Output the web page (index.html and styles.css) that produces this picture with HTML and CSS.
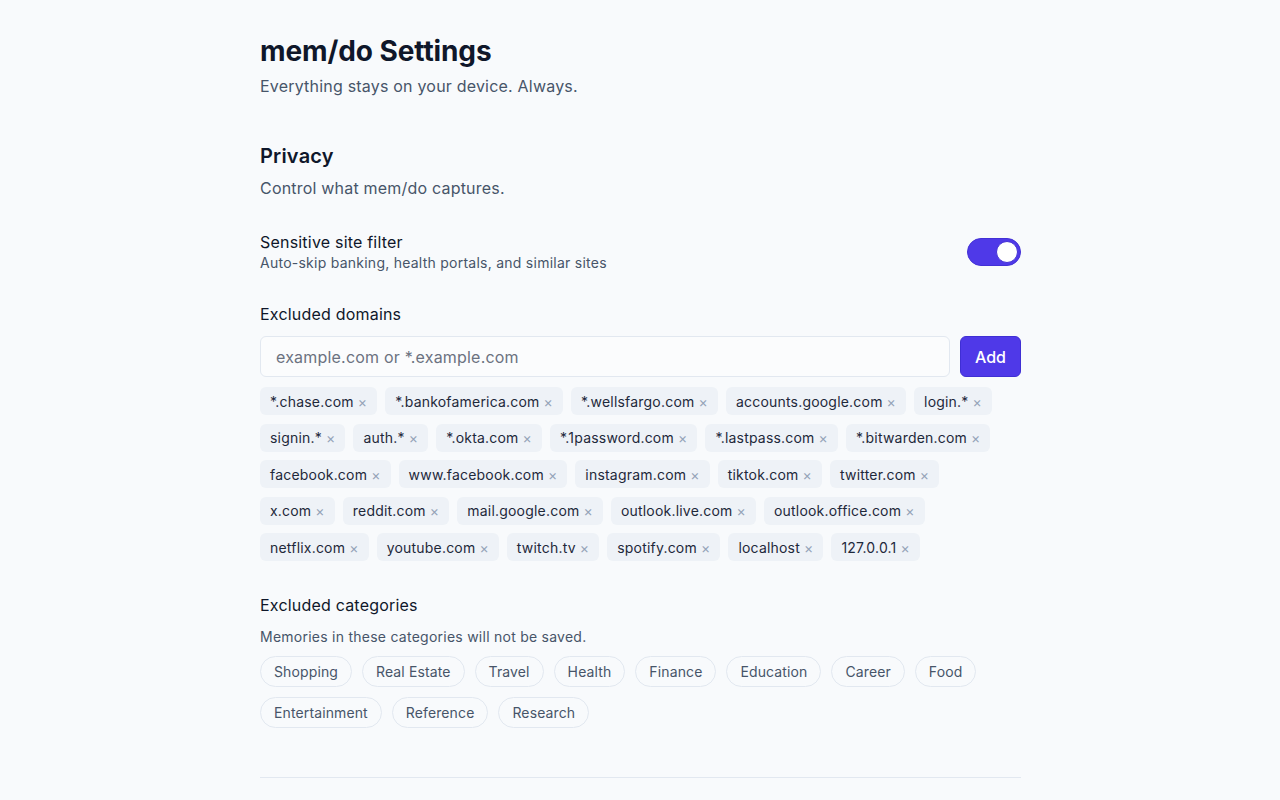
FILE: index.html
```html
<!DOCTYPE html>
<html>
<head>
  <title>mem/do Settings</title>
  <link rel="stylesheet" href="styles.css">
</head>
<body>
  <div class="page">
    <h1>mem/do Settings</h1>
    <p class="subtitle">Everything stays on your device. Always.</p>

    <section class="section">
      <h2>Privacy</h2>
      <p class="section-desc">Control what mem/do captures.</p>

      <div class="setting-row">
        <div>
          <div class="setting-label">Sensitive site filter</div>
          <div class="setting-hint">Auto-skip banking, health portals, and similar sites</div>
        </div>
        <label class="toggle">
          <input type="checkbox" checked>
          <span class="toggle-track"><span class="toggle-knob"></span></span>
        </label>
      </div>

      <div class="field">
        <div class="setting-label">Excluded domains</div>
        <div class="add-row">
          <input type="text" class="domain-input" placeholder="example.com or *.example.com">
          <button class="add-btn">Add</button>
        </div>
        <div class="tags" id="domains"></div>
      </div>

      <div class="field field-cats">
        <div class="setting-label">Excluded categories</div>
        <p class="field-hint">Memories in these categories will not be saved.</p>
        <div class="chips" id="categories"></div>
      </div>
    </section>

    <hr class="divider">
  </div>

  <script>
    const domains = [
      "*.chase.com", "*.bankofamerica.com", "*.wellsfargo.com", "accounts.google.com", "login.*",
      "signin.*", "auth.*", "*.okta.com", "*.1password.com", "*.lastpass.com", "*.bitwarden.com",
      "facebook.com", "www.facebook.com", "instagram.com", "tiktok.com", "twitter.com",
      "x.com", "reddit.com", "mail.google.com", "outlook.live.com", "outlook.office.com",
      "netflix.com", "youtube.com", "twitch.tv", "spotify.com", "localhost", "127.0.0.1"
    ];
    const categories = [
      "Shopping", "Real Estate", "Travel", "Health", "Finance", "Education", "Career", "Food",
      "Entertainment", "Reference", "Research"
    ];

    const domainList = document.getElementById("domains");
    domains.forEach(function (d) {
      const tag = document.createElement("span");
      tag.className = "tag";
      tag.innerHTML = d + ' <span class="tag-x">&times;</span>';
      domainList.appendChild(tag);
    });

    const catList = document.getElementById("categories");
    categories.forEach(function (c) {
      const chip = document.createElement("button");
      chip.className = "chip";
      chip.textContent = c;
      catList.appendChild(chip);
    });
  </script>
</body>
</html>
```

FILE: styles.css
```css
body {
  margin: 0;
  background-color: #f8fafc;
  font-family: Inter, "Noto Sans", sans-serif;
  color: #0f172a;
  letter-spacing: 0.2px;
}

.page {
  max-width: 761px;
  margin: 0 auto;
  padding: 34px 0 0 1px;
}

h1 {
  font-size: 28px;
  font-weight: 700;
  letter-spacing: -0.1px;
  margin: 0;
  line-height: 34px;
}

.subtitle {
  margin: 7px 0 0;
  font-size: 16px;
  line-height: 22px;
  color: #475569;
}

.section {
  margin-top: 45px;
}

h2 {
  font-size: 20px;
  font-weight: 600;
  margin: 0;
  line-height: 28px;
}

.section-desc {
  margin: 7px 0 0;
  font-size: 16px;
  line-height: 22px;
  color: #475569;
}

.setting-row {
  display: flex;
  align-items: center;
  justify-content: space-between;
  margin-top: 32px;
}

.setting-label {
  font-size: 16px;
  font-weight: 400;
  line-height: 22px;
  color: #0f172a;
}

.setting-hint {
  font-size: 14px;
  line-height: 20px;
  color: #475569;
  letter-spacing: 0.25px;
}

.toggle input {
  display: none;
}

.toggle-track {
  display: flex;
  align-items: center;
  justify-content: flex-end;
  width: 48px;
  height: 26px;
  padding: 0 2px;
  border-radius: 14px;
  background-color: #4f39e8;
  border: 1px solid #4330d6;
}

.toggle-knob {
  width: 20px;
  height: 20px;
  border-radius: 50%;
  background-color: #ffffff;
  border: 1px solid #4330d6;
}

.field {
  margin-top: 30px;
}

.add-row {
  display: flex;
  gap: 10px;
  margin-top: 11px;
}

.domain-input {
  flex: 1;
  height: 41px;
  box-sizing: border-box;
  padding: 0 15px;
  border: 1px solid #e2e8f0;
  border-radius: 6px;
  background-color: #fbfcfd;
  font-family: inherit;
  font-size: 16px;
  letter-spacing: 0.2px;
  color: #0f172a;
}

.domain-input::placeholder {
  color: #6b7280;
}

.add-btn {
  width: 61px;
  height: 41px;
  border: 1px solid #3f2fd4;
  border-radius: 6px;
  background-color: #4f39e8;
  color: #ffffff;
  font-family: inherit;
  font-size: 16px;
  font-weight: 500;
}

.tags {
  display: flex;
  flex-wrap: wrap;
  gap: 8.5px 8px;
  margin-top: 10px;
}

.tag {
  display: inline-flex;
  align-items: center;
  gap: 4px;
  height: 28px;
  padding: 0 10px;
  border-radius: 6px;
  background-color: #eef2f7;
  font-size: 14px;
  letter-spacing: 0.2px;
  color: #1e293b;
}

.tag-x {
  color: #94a3b8;
  font-size: 14px;
}

.field-cats {
  margin-top: 33px;
}

.field-hint {
  margin: 11px 0 0;
  font-size: 14px;
  line-height: 20px;
  letter-spacing: 0.25px;
  color: #475569;
}

.chips {
  display: flex;
  flex-wrap: wrap;
  gap: 10px;
  margin-top: 9px;
}

.chip {
  height: 31px;
  padding: 0 13px;
  border: 1px solid #e2e8f0;
  border-radius: 16px;
  background-color: #f8fafc;
  font-family: inherit;
  font-size: 14px;
  letter-spacing: 0.12px;
  color: #475569;
}

.divider {
  margin: 49px 0 0;
  border: none;
  border-top: 1px solid #e2e8f0;
}
```
